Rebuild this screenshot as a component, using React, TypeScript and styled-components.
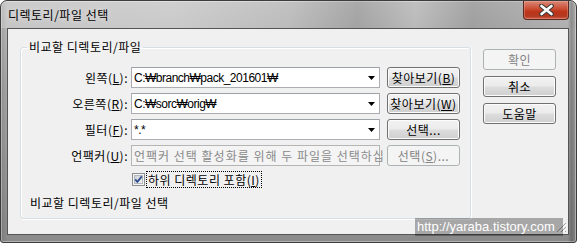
import React from "react";
import styled, { createGlobalStyle, css } from "styled-components";

// Style
const GlobalStyle = createGlobalStyle`
  html, body {
    margin: 0;
    padding: 0;
    background: #ffffff;
  }
  body {
    font-family: "Liberation Sans", "Noto Sans CJK KR", sans-serif;
    font-size: 12px;
    color: #000000;
  }
`;

const UI_FONT = `"Noto Sans CJK KR", "Liberation Sans", sans-serif`;
const FIELD_FONT = `"Liberation Sans", "Noto Sans CJK KR", sans-serif`;

const uiText = css`
  font-family: ${UI_FONT};
  font-size: 12px;
  line-height: 14px;
  letter-spacing: 0.5px;
`;

// Type
interface ButtonProps {
  $disabled?: boolean;
}

const rows = [
  { label: "왼쪽", key: "L", value: "C:₩branch₩pack_201601₩", button: "찾아보기", btnKey: "B" },
  { label: "오른쪽", key: "R", value: "C:₩sorc₩orig₩", button: "찾아보기", btnKey: "W" },
];

function Accel({ text, k }: { text: string; k: string }) {
  return (
    <>
      {text}(<u>{k}</u>)
    </>
  );
}

function DropArrow() {
  return (
    <svg width="7" height="4" viewBox="0 0 7 4">
      <path d="M0 0 H7 L3.5 4 Z" fill="#000" />
    </svg>
  );
}

function App() {
  return (
    <>
      <GlobalStyle />
      <Window>
        <TitleBar>
          <Title>디렉토리/파일 선택</Title>
          <CloseButton>
            <svg width="15" height="12" viewBox="0 0 15 12">
              <path d="M2.5 2 L12.5 10 M12.5 2 L2.5 10" stroke="#3a3a3a" strokeWidth="4.6" strokeLinecap="round" fill="none" />
              <path d="M2.5 2 L12.5 10 M12.5 2 L2.5 10" stroke="#ffffff" strokeWidth="2.6" strokeLinecap="round" fill="none" />
            </svg>
          </CloseButton>
        </TitleBar>

        <Client>
          <GroupBox>
            <Legend>비교할 디렉토리/파일</Legend>
            <FormGrid>
              {rows.map((row) => (
                <React.Fragment key={row.key}>
                  <Label>
                    <Accel text={row.label} k={row.key} />:
                  </Label>
                  <Combo>
                    <ComboText>{row.value}</ComboText>
                    <DropArrow />
                  </Combo>
                  <Button>
                    <Accel text={row.button} k={row.btnKey} />
                  </Button>
                </React.Fragment>
              ))}

              <Label>
                <Accel text="필터" k="F" />:
              </Label>
              <Combo>
                <ComboText>*.*</ComboText>
                <DropArrow />
              </Combo>
              <Button>선택...</Button>

              <Label>
                <Accel text="언팩커" k="U" />:
              </Label>
              <Field>언팩커 선택 활성화를 위해 두 파일을 선택하십</Field>
              <Button $disabled>
                <Accel text="선택" k="S" />...
              </Button>
            </FormGrid>

            <CheckRow>
              <svg width="13" height="13" viewBox="0 0 13 13">
                <defs>
                  <linearGradient id="cbg" x1="0" y1="0" x2="1" y2="1">
                    <stop offset="0" stopColor="#cbcfd5" />
                    <stop offset="1" stopColor="#f6f6f6" />
                  </linearGradient>
                </defs>
                <rect x="0.5" y="0.5" width="12" height="12" fill="#f4f4f4" stroke="#8e8f8f" />
                <rect x="2.5" y="2.5" width="8" height="8" fill="url(#cbg)" stroke="#b3b8bd" />
                <path d="M3.2 6.4 L5.4 8.8 L9.8 3.4" stroke="#2f4f8f" strokeWidth="1.9" fill="none" />
              </svg>
              <CheckLabel>
                하위 디렉토리 포함(<u>I</u>)
              </CheckLabel>
            </CheckRow>

            <Status>비교할 디렉토리/파일 선택</Status>
          </GroupBox>

          <SideButtons>
            <Button $disabled>확인</Button>
            <Button>취소</Button>
            <Button>도움말</Button>
          </SideButtons>

          <Grip width="12" height="12" viewBox="0 0 12 12">
            <path d="M11 2 L2 11 M11 6 L6 11 M11 10 L10 11" stroke="#a0a0a0" strokeWidth="1" />
            <path d="M12 3 L3 12 M12 7 L7 12" stroke="#ffffff" strokeWidth="1" />
          </Grip>
        </Client>

        <Watermark>http://yaraba.tistory.com</Watermark>
      </Window>
    </>
  );
}

export default App;

const Window = styled.div`
  position: relative;
  width: 577px;
  height: 243px;
  box-sizing: border-box;
  display: flex;
  flex-direction: column;
  border: 1px solid #3c3c3c;
  border-radius: 7px 7px 3px 3px;
  overflow: hidden;
  background:
    linear-gradient(90deg, rgba(0, 0, 0, 0.12) 0%, rgba(0, 0, 0, 0) 1%, rgba(0, 0, 0, 0) 98.6%, rgba(0, 0, 0, 0.22) 99.2%, rgba(0, 0, 0, 0.05) 100%),
    linear-gradient(180deg, #bdbdbd 0%, #a5a5a5 35%, #8a8a8a 100%);
  box-shadow: inset 0 0 0 1px rgba(255, 255, 255, 0.35);
`;

const TitleBar = styled.div`
  height: 27px;
  flex-shrink: 0;
  display: flex;
  align-items: flex-start;
  padding: 0 7px 0 7px;
  background: linear-gradient(
    90deg,
    rgba(255, 255, 255, 0.22) 0%,
    rgba(255, 255, 255, 0.28) 30%,
    rgba(255, 255, 255, 0.08) 50%,
    rgba(0, 0, 0, 0.1) 62%,
    rgba(255, 255, 255, 0.06) 72%,
    rgba(0, 0, 0, 0.12) 82%,
    rgba(0, 0, 0, 0.02) 100%
  );
`;

const Title = styled.div`
  ${uiText};
  margin-top: 7px;
  color: #000;
  text-shadow: 0 0 6px rgba(255, 255, 255, 0.7);
`;

const CloseButton = styled.div`
  margin-left: auto;
  width: 46px;
  height: 19px;
  box-sizing: border-box;
  display: flex;
  align-items: center;
  justify-content: center;
  border: 1px solid #5a2a22;
  border-top: none;
  border-radius: 0 0 4px 4px;
  background: linear-gradient(180deg, #d98a78 0%, #cc5238 40%, #bb3418 60%, #b43a22 85%, #cf6249 100%);
  box-shadow: inset 0 0 0 1px rgba(255, 200, 190, 0.3);
`;

const Client = styled.div`
  position: relative;
  flex: 1;
  margin: 0 7px 7px 6px;
  box-sizing: border-box;
  border: 1px solid #555555;
  background: #f0f0f0;
  display: flex;
  align-items: flex-start;
  gap: 12px;
  padding: 11px 12px 0 12px;
`;

const GroupBox = styled.fieldset`
  margin: 0;
  padding: 0 0 8px 0;
  width: 451px;
  box-sizing: border-box;
  border: 1px solid #d5dfe5;
  border-radius: 3px;
  box-shadow: 1px 1px 0 #ffffff, inset 1px 1px 0 #ffffff;
  min-inline-size: 0;
`;

const Legend = styled.legend`
  ${uiText};
  padding: 0 2px;
  margin-left: 6px;
`;

const FormGrid = styled.div`
  margin-top: 13px;
  display: grid;
  grid-template-columns: 107px 249px 73px;
  grid-auto-rows: 21px;
  column-gap: 3px;
  row-gap: 5px;
  & > :nth-child(3n) {
    margin-left: 4px;
  }
`;

const Label = styled.div`
  ${uiText};
  display: flex;
  align-items: center;
  justify-content: flex-end;
  white-space: nowrap;
  u {
    text-underline-offset: 1px;
  }
`;

const Combo = styled.div`
  box-sizing: border-box;
  height: 21px;
  border: 1px solid #abadb3;
  border-top-color: #9da1a8;
  background: #ffffff;
  display: flex;
  align-items: center;
  padding: 0 4px 0 2px;
  & svg {
    margin-left: auto;
    flex-shrink: 0;
  }
`;

const ComboText = styled.span`
  font-family: ${FIELD_FONT};
  font-size: 12px;
  line-height: 14px;
  letter-spacing: -0.5px;
  white-space: nowrap;
`;

const Field = styled.div`
  ${uiText};
  letter-spacing: 1px;
  box-sizing: border-box;
  height: 21px;
  border: 1px solid #b5b5b5;
  background: #f4f4f4;
  color: #8a8a8a;
  line-height: 19px;
  padding: 0 2px;
  white-space: nowrap;
`;

const Button = styled.div<ButtonProps>`
  ${uiText};
  box-sizing: border-box;
  width: 73px;
  height: 21px;
  display: flex;
  align-items: center;
  justify-content: center;
  white-space: nowrap;
  border-radius: 3px;
  border: 1px solid #707070;
  color: #000;
  background: linear-gradient(180deg, #f2f2f2 0%, #ebebeb 48%, #dddddd 52%, #cfcfcf 100%);
  box-shadow: inset 0 0 0 1px #fcfcfc;

  ${(props) =>
    props.$disabled &&
    css`
      border-color: #adb2b5;
      background: #f4f4f4;
      color: #838383;
      box-shadow: none;
    `}
`;

const CheckRow = styled.div`
  margin: 5px 0 0 111px;
  height: 17px;
  display: flex;
  align-items: center;
  gap: 1px;
`;

const CheckLabel = styled.span`
  ${uiText};
  line-height: 15px;
  border: 1px dotted #000;
  padding: 0 1px;
`;

const Status = styled.div`
  ${uiText};
  margin: 8px 0 0 9px;
`;

const SideButtons = styled.div`
  margin-top: 9px;
  display: flex;
  flex-direction: column;
  gap: 6px;
`;

const Grip = styled.svg`
  position: absolute;
  right: 1px;
  bottom: 1px;
`;

const Watermark = styled.div`
  position: absolute;
  right: 13px;
  top: 217px;
  width: 148px;
  height: 18px;
  box-sizing: border-box;
  padding-left: 2px;
  background: rgba(0, 0, 0, 0.3);
  color: #ffffff;
  font-family: "Liberation Sans", sans-serif;
  font-size: 13px;
  line-height: 18px;
  white-space: nowrap;
`;
